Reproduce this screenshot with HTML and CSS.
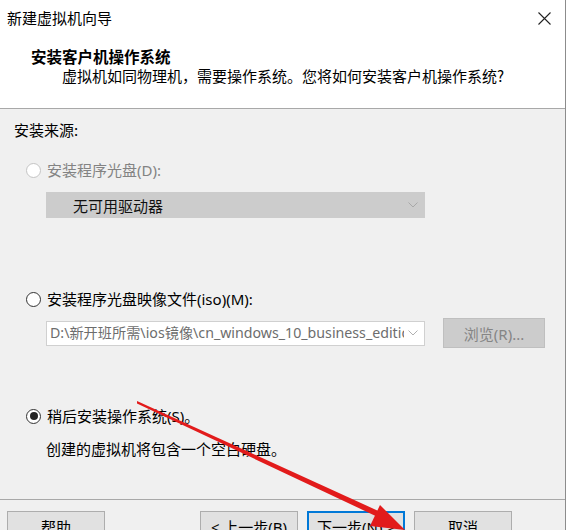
FILE: index.html
```html
<!DOCTYPE html>
<html lang="zh-CN">
<head>
<meta charset="utf-8">
<title>新建虚拟机向导</title>
<link rel="stylesheet" href="styles.css">
</head>
<body>
<div class="window">
  <div class="titlebar">
    <span class="title">新建虚拟机向导</span>
    <span class="close">
      <svg width="13" height="13" viewBox="0 0 13 13"><path d="M0.5 0.5 L12.5 12.5 M12.5 0.5 L0.5 12.5" stroke="#222" stroke-width="1.1" fill="none"/></svg>
    </span>
  </div>
  <div class="header">
    <div class="heading">安装客户机操作系统</div>
    <div class="subtitle">虚拟机如同物理机，需要操作系统。您将如何安装客户机操作系统?</div>
  </div>
  <div class="content">
    <div class="source-label">安装来源:</div>

    <div class="radio-row disabled row-disc">
      <span class="radio"></span>
      <span class="label">安装程序光盘(D):</span>
    </div>
    <div class="select disabled-select">
      <span class="select-text">无可用驱动器</span>
      <span class="chev">
        <svg width="10" height="6" viewBox="0 0 10 6"><path d="M0.5 0.5 L5 5 L9.5 0.5" stroke="#a8a8a8" stroke-width="1" fill="none"/></svg>
      </span>
    </div>

    <div class="radio-row row-iso">
      <span class="radio"></span>
      <span class="label">安装程序光盘映像文件(iso)(M):</span>
    </div>
    <div class="iso-row">
      <div class="select combo">
        <span class="combo-text">D:\新开班所需\ios镜像\cn_windows_10_business_editions_version_1903</span>
        <span class="chev">
          <svg width="10" height="6" viewBox="0 0 10 6"><path d="M0.5 0.5 L5 5 L9.5 0.5" stroke="#b0b0b0" stroke-width="1" fill="none"/></svg>
        </span>
      </div>
      <div class="browse">浏览(R)...</div>
    </div>

    <div class="radio-row row-later">
      <span class="radio checked"></span>
      <span class="label">稍后安装操作系统(S)。</span>
    </div>
    <div class="note">创建的虚拟机将包含一个空白硬盘。</div>
  </div>
  <div class="footer">
    <button class="btn">帮助</button>
    <div class="btn-group">
      <button class="btn">&lt; 上一步(B)</button>
      <button class="btn default">下一步(N) &gt;</button>
      <button class="btn">取消</button>
    </div>
  </div>

  <svg class="arrow" width="566" height="530" viewBox="0 0 566 530">
    <polygon points="137,401 137,403.5 382,519 385,514" fill="#e21b1b"/>
    <polygon points="405,530 380,505 370,526" fill="#e21b1b"/>
  </svg>
</div>
</body>
</html>
```

FILE: styles.css
```css
html, body {
  margin: 0;
  padding: 0;
  background: #f0f0f0;
  overflow: hidden;
}

.window {
  position: relative;
  width: 565px;
  height: 530px;
  overflow: hidden;
  border-right: 1px solid #8c8c8c;
  background: #f0f0f0;
  font-family: "Noto Sans", "Noto Sans CJK SC", sans-serif;
  font-size: 15px;
  color: #000;
}

.titlebar {
  height: 36px;
  background: #fff;
  display: flex;
  align-items: center;
  justify-content: space-between;
  padding: 0 14px 0 7px;
  box-sizing: border-box;
}

.title {
  font-family: "Noto Sans CJK SC", sans-serif;
  font-size: 15px;
  line-height: 20px;
}

.close {
  display: flex;
  width: 13px;
  height: 13px;
}

.header {
  background: #fff;
  padding: 10px 0 22px 0;
  border-bottom: 1px solid #a8a8a8;
}

.heading {
  font-family: "Noto Sans CJK SC", sans-serif;
  font-weight: bold;
  font-size: 15.5px;
  line-height: 20px;
  padding-left: 31px;
}

.subtitle {
  font-family: "Noto Sans CJK SC", sans-serif;
  line-height: 20px;
  padding-left: 62px;
}

.content {
  height: 391px;
  box-sizing: border-box;
  padding-top: 11px;
  border-bottom: 1px solid #a8a8a8;
  display: flex;
  flex-direction: column;
  align-items: flex-start;
}

.source-label {
  font-family: "Noto Sans CJK SC", sans-serif;
  line-height: 20px;
  padding-left: 14px;
}

.radio-row {
  display: flex;
  align-items: center;
  height: 20px;
  padding-left: 26px;
}

.row-disc { margin-top: 20px; }
.row-iso { margin-top: 71px; }
.row-later { margin-top: 58px; }

.radio {
  width: 15px;
  height: 15px;
  border-radius: 50%;
  border: 1px solid #333;
  background: #fff;
  box-sizing: border-box;
  margin-right: 6px;
  position: relative;
}

.radio.checked::after {
  content: "";
  position: absolute;
  left: 2.5px;
  top: 2.5px;
  width: 8px;
  height: 8px;
  border-radius: 50%;
  background: #222;
}

.disabled .radio {
  border-color: #c4c4c4;
}

.disabled .label {
  color: #838383;
}

.label {
  line-height: 20px;
}

.select {
  width: 379px;
  height: 26px;
  box-sizing: border-box;
  margin-left: 46px;
  display: flex;
  align-items: center;
  justify-content: space-between;
  padding-right: 6px;
}

.disabled-select {
  margin-top: 12px;
  background: #cccccc;
  border: 1px solid #cccccc;
  padding-left: 26px;
}

.select-text {
  font-family: "Noto Sans CJK SC", sans-serif;
  color: #111;
}

.chev {
  display: flex;
}

.iso-row {
  margin-top: 9px;
  display: flex;
  align-items: center;
  height: 30px;
}

.combo {
  background: #fff;
  border: 1px solid #d0d0d0;
  padding-left: 3px;
  height: 25px;
}

.combo-text {
  width: 354px;
  overflow: hidden;
  white-space: nowrap;
  color: #6d6d6d;
  font-size: 14.2px;
  line-height: 20px;
}

.browse {
  margin-left: 18px;
  width: 102px;
  height: 30px;
  box-sizing: border-box;
  background: #cccccc;
  border: 1px solid #bfbfbf;
  color: #858585;
  display: flex;
  align-items: center;
  justify-content: center;
}

.note {
  margin-top: 13px;
  padding-left: 46px;
  line-height: 20px;
  font-family: "Noto Sans CJK SC", sans-serif;
}

.footer {
  display: flex;
  justify-content: space-between;
  align-items: flex-start;
  padding: 11px 53px 0 7px;
}

.btn-group {
  display: flex;
  gap: 9px;
}

.btn {
  width: 98px;
  height: 30px;
  box-sizing: border-box;
  background: #e1e1e1;
  border: 1px solid #adadad;
  font-family: "Noto Sans", "Noto Sans CJK SC", sans-serif;
  font-size: 15px;
  color: #000;
  padding: 0;
  margin: 0;
}

.btn.default {
  border: 2px solid #0078d7;
}

.arrow {
  position: absolute;
  left: 0;
  top: 0;
  pointer-events: none;
}
```
